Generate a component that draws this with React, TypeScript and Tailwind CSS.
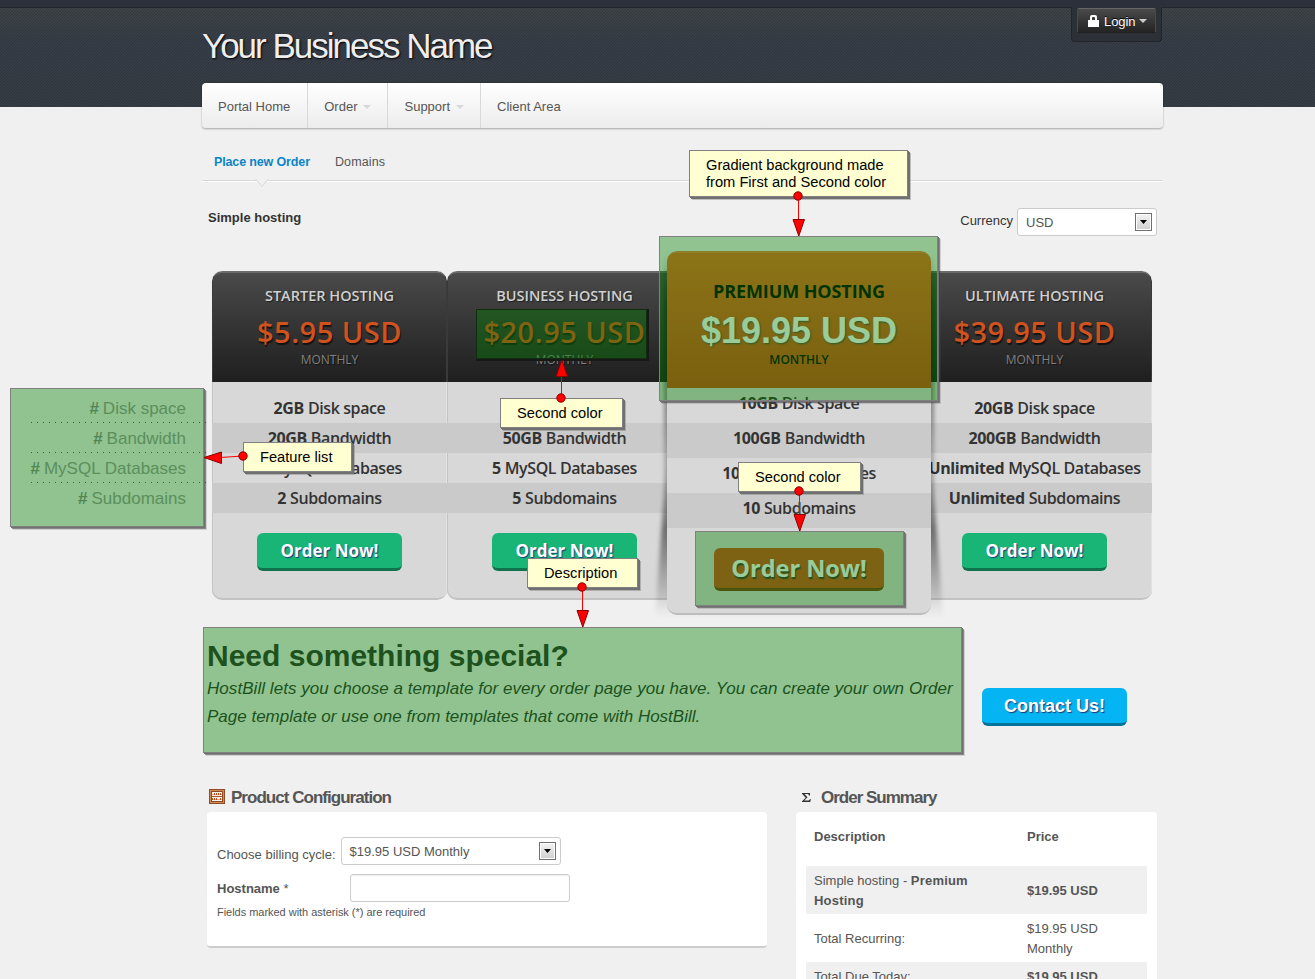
import React from "react";

type Feature = [string, string];

const plans: { name: string; price: string; features: Feature[]; featured?: boolean }[] = [
  { name: "STARTER HOSTING", price: "$5.95 USD", features: [["2GB", "Disk space"], ["20GB", "Bandwidth"], ["2", "MySQL Databases"], ["2", "Subdomains"]] },
  { name: "BUSINESS HOSTING", price: "$20.95 USD", features: [["20GB", "Disk space"], ["50GB", "Bandwidth"], ["5", "MySQL Databases"], ["5", "Subdomains"]] },
  { name: "PREMIUM HOSTING", price: "$19.95 USD", featured: true, features: [["10GB", "Disk space"], ["100GB", "Bandwidth"], ["10", "MySQL Databases"], ["10", "Subdomains"]] },
  { name: "ULTIMATE HOSTING", price: "$39.95 USD", features: [["20GB", "Disk space"], ["200GB", "Bandwidth"], ["Unlimited", "MySQL Databases"], ["Unlimited", "Subdomains"]] },
];

function Caret({ className }: { className: string }) {
  return (
    <svg width="8" height="4" viewBox="0 0 8 4" className={className}>
      <path d="M0 0h8L4 4z" fill="currentColor" />
    </svg>
  );
}

function Select({ value, className }: { value: string; className: string }) {
  return (
    <div className={`flex h-7 items-center justify-between rounded-[3px] border border-[#ccc] bg-white pl-2 pr-1 text-[13px] text-[#555] ${className}`}>
      <span className="pt-0.5">{value}</span>
      <span className="flex h-[18px] w-[17px] items-center justify-center border border-[#707070] bg-linear-to-b from-[#f4f4f4] to-[#cfcfcf] shadow-[inset_0_0_0_1px_#fff]">
        <svg width="7" height="4" viewBox="0 0 7 4"><path d="M0 0h7L3.5 4z" fill="#000" /></svg>
      </span>
    </div>
  );
}

function NavItem({ label, caret, last }: { label: string; caret?: boolean; last?: boolean }) {
  return (
    <div className={`flex items-center px-4 pt-0.5 text-[13px] text-[#555] ${last ? "" : "border-r border-[#d9d9d9]"}`}>
      <span className={caret || last ? "" : "pr-px"}>{label}</span>
      {caret && <Caret className="ml-1.5 text-[#d8d8d8]" />}
    </div>
  );
}

function Plan({ plan }: { plan: (typeof plans)[number] }) {
  return (
    <div className="flex h-[329px] w-[235px] shrink-0 flex-col overflow-hidden rounded-[10px] border-b-2 border-[#c2c2c2] bg-[#d8d8d8] shadow-[inset_1px_0_0_#c4c4c4,inset_-1px_0_0_#e2e2e2]">
      <div className="flex h-[111px] shrink-0 flex-col items-center rounded-t-[10px] border border-t-2 border-b-0 border-x-[#3a3a3a] border-t-[#6a6a6a] bg-linear-to-b from-[#4a4a4a] to-[#1f1f1f] whitespace-nowrap">
        <div className="mt-3 text-[14.5px] leading-[22px] font-semibold text-[#d0d0d0] [text-shadow:1px_1px_1px_rgba(0,0,0,0.5)]">{plan.name}</div>
        <div className="mt-1.5 text-[29px] leading-[38px] font-semibold tracking-[0.5px] text-[#d0521f] [text-shadow:1px_2px_1px_rgba(0,0,0,0.6)]">{plan.price}</div>
        <div className="mt-px text-[12px] leading-4 text-[#808080] [text-shadow:1px_1px_1px_rgba(0,0,0,0.5)]">MONTHLY</div>
      </div>
      <div className="mt-[11px] text-[16px] leading-[30px] font-semibold tracking-[-0.4px] text-[#333]">
        {plan.features.map(([n, t], i) => (
          <div key={i} className={`flex justify-center gap-1 whitespace-nowrap ${i % 2 ? "bg-[#cacaca]" : ""}`}>
            <b className="font-bold">{n}</b><span>{t}</span>
          </div>
        ))}
      </div>
      <div className="mt-5 h-[38px] w-[145px] self-center rounded-md border-b-[3px] border-[#11734e] bg-[#19b576] text-center text-[17px] leading-[35px] font-bold text-white [text-shadow:1px_1px_1px_#1a3a7a]">Order Now!</div>
    </div>
  );
}

function PlanShadow() {
  return (
    <svg width="304" height="380" viewBox="0 0 304 380" className="absolute -left-5 top-0 -z-10">
      <defs>
        <filter id="soft"><feGaussianBlur stdDeviation="2.2" /></filter>
        <linearGradient id="fade" x1="0" x2="0" y1="0" y2="1">
          <stop offset="0" stopColor="#000" stopOpacity="0" />
          <stop offset=".5" stopColor="#000" stopOpacity=".5" />
          <stop offset=".75" stopColor="#000" stopOpacity=".25" />
          <stop offset="1" stopColor="#000" stopOpacity="0" />
        </linearGradient>
        <linearGradient id="edge" x1="0" x2="0" y1="0" y2="1">
          <stop offset="0" stopColor="#000" stopOpacity="0" />
          <stop offset=".2" stopColor="#000" stopOpacity=".5" />
          <stop offset=".6" stopColor="#000" stopOpacity=".35" />
          <stop offset="1" stopColor="#000" stopOpacity="0" />
        </linearGradient>
      </defs>
      <g filter="url(#soft)">
        <path d="M17 4H287V270H17z" fill="url(#edge)" />
        <path d="M21 190L8 366H296L283 190z" fill="url(#fade)" />
      </g>
    </svg>
  );
}

function FeaturedPlan({ plan }: { plan: (typeof plans)[number] }) {
  return (
    <div className="relative z-10 -mt-5 mr-[-14px] ml-[-15px] w-[264px] shrink-0">
      <PlanShadow />
      <div className="flex h-[364px] flex-col overflow-hidden rounded-[10px] border-b-2 border-[#bcbcbc] bg-[#d8d8d8]">
        <div className="flex h-[137px] shrink-0 flex-col items-center rounded-t-[10px] border-t-2 border-[#ed8049] bg-linear-to-b from-[#e96c28] to-[#cc4b1a] whitespace-nowrap">
          <div className="mt-6 text-[18px] leading-7 font-bold tracking-[-0.1px] text-black">{plan.name}</div>
          <div className="mt-1.5 font-['Liberation_Sans',sans-serif] text-[36px] leading-[40px] font-bold text-white [text-shadow:1px_1px_2px_#444]">{plan.price}</div>
          <div className="mt-px text-[12px] leading-4 font-semibold text-black">MONTHLY</div>
        </div>
        <div className="text-[16px] leading-[30px] font-semibold tracking-[-0.4px] text-[#333]">
          {plan.features.map(([n, t], i) => (
            <div key={i} className={`flex h-[35px] items-center justify-center gap-1 pb-[5px] whitespace-nowrap ${i % 2 ? "bg-[#cacaca]" : ""}`}>
              <b className="font-bold">{n}</b><span>{t}</span>
            </div>
          ))}
        </div>
        <div className="mt-5 h-[43px] w-[170px] self-center rounded-md border-b-[3px] border-[#7c3a16] bg-[#cf4f1e] text-center text-[23.5px] leading-[40px] font-bold text-white [text-shadow:1px_2px_1px_#333]">Order Now!</div>
      </div>
    </div>
  );
}

function Highlight({ className, onDark }: { className: string; onDark?: boolean }) {
  return (
    <div className={`absolute z-20 border bg-[rgba(0,128,0,0.4)] ${onDark ? "border-[#102d10] shadow-[1px_1px_0_1px_#181818]" : "border-[#808080] shadow-[1px_1px_0_#707070,2px_2px_0_rgba(60,60,60,0.5),3px_3px_0_rgba(80,80,80,0.2)]"} ${className}`} />
  );
}

function Callout({ className, children }: { className: string; children: React.ReactNode }) {
  return (
    <div className={`absolute z-30 border border-[#808080] bg-[#ffffd2] px-4 text-[14.67px] leading-[17px] whitespace-nowrap text-black shadow-[1px_1px_0_#707070,2px_2px_0_#707070,3px_3px_0_rgba(100,100,100,0.35)] ${className}`}>
      {children}
    </div>
  );
}

function Arrows() {
  return (
    <svg width="1315" height="979" viewBox="0 0 1315 979" className="pointer-events-none absolute inset-0 z-40">
      <g stroke="#f00" fill="none">
        <path d="M798.5 196V220M561.5 398V375M582.5 587V612M799.5 491V516M243 456L220 457.5" />
      </g>
      <g stroke="#8b0000" strokeWidth="1" fill="#f00">
        <path d="M793 219.5h11.5L798.8 236z" />
        <path d="M556 376.5h11.5L561.8 360z" />
        <path d="M577 610.5h11.5L582.8 627z" />
        <path d="M794 514.5h11.5L799.8 531z" />
        <path d="M221.500 452v11.500L204 457.500z" />
        <circle cx="798" cy="196" r="4.200" />
        <circle cx="561" cy="398" r="4.200" />
        <circle cx="582" cy="587" r="4.200" />
        <circle cx="799" cy="491" r="4.200" />
        <circle cx="243" cy="456" r="4.200" />
      </g>
    </svg>
  );
}

function HeaderTexture() {
  return (
    <svg width="1315" height="99" className="absolute left-0 top-2" shapeRendering="crispEdges">
      <pattern id="hatch" width="3" height="3" patternUnits="userSpaceOnUse">
        <path d="M0 2h1v1H0zM1 1h1v1H1zM2 0h1v1H2z" fill="#000" fillOpacity=".16" />
      </pattern>
      <rect width="1315" height="99" fill="url(#hatch)" />
    </svg>
  );
}

function AbacusIcon() {
  return (
    <svg width="16" height="16" viewBox="0 0 16 16" shapeRendering="crispEdges">
      <path d="M0 0h16v15H0z" fill="#8f4a26" />
      <path d="M1 1h14v13H1z" fill="#d08a55" />
      <path d="M2 2h12v11H2z" fill="#8f4a26" />
      <path d="M3 3h10v9H3z" fill="#f7f1ea" />
      <path d="M3 5h10v1H3zM3 10h10v1H3z" fill="#cfae96" />
      <path d="M5 4h1v2H5zM7 4h1v2H7zM9 4h1v2H9zM11 4h1v2h-1zM3 7h10v1H3zM3 9h1v2H3zM5 9h1v2H5zM7 9h1v2H7zM11 9h1v2h-1z" fill="#a85424" />
    </svg>
  );
}

export default function App() {
  return (
    <div className="relative h-[979px] w-[1315px] overflow-hidden bg-[#f0f0f0] font-['Liberation_Sans',Arial,sans-serif] text-[13px] text-[#555]">
      <header className="relative h-[107px] bg-[linear-gradient(#3f4547,#383e48_40%,#363d44)]">
        <HeaderTexture />
        <div className="h-2 border-b border-[#22262b] bg-[#2c303a]" />
        <div className="relative ml-[202px] flex w-[960px] items-start justify-between">
          <h1 className="mt-[17px] text-[35px] leading-[42px] tracking-[-2px] text-[#eee] [text-shadow:1px_1px_2px_#000]">Your Business Name</h1>
          <div className="-mt-px h-[35px] w-[91px] rounded-b border border-t-0 border-[#22262b] bg-[#2c3037] px-[5px] pt-px">
            <div className="flex h-[25px] w-[79px] items-center rounded-[2px] border border-x-[#4a4a4a] border-t-[#666] border-b-[#222] bg-linear-to-b from-[#4a4a4a] to-[#242424] pl-2.5 text-[13px] text-white">
              <svg width="11" height="12" viewBox="0 0 11 12"><path d="M0 5h2V2q0-2 2-2h3q2 0 2 2v3h2v7H0zM4 5h3V3q0-1-1-1H5Q4 2 4 3z" fill="#fff" /></svg>
              <span className="mt-0.5 ml-[5px] tracking-[-0.1px] [text-shadow:0_-1px_0_#000]">Login</span>
              <Caret className="ml-1 text-[#ccc]" />
            </div>
          </div>
        </div>
      </header>

      <main className="relative -mt-6 ml-[202px] w-[961px]">
        <nav className="flex h-[46px] w-[961px] rounded-[4px] border-b border-[#bbb] bg-linear-to-b from-white to-[#ececec] shadow-[0_0_2px_rgba(0,0,0,0.35)]">
          <NavItem label="Portal Home" />
          <NavItem label="Order" caret />
          <NavItem label="Support" caret />
          <NavItem label="Client Area" last />
        </nav>

        <div className="relative flex h-[52px] w-[960px] gap-[25px] border-b border-[#d8d8d8] pl-3 pt-[25px] text-[12.500px] leading-4 shadow-[0_1px_0_#fff]">
          <span className="font-bold tracking-[-0.14px] text-[#0a85c7]">Place new Order</span>
          <span className="tracking-[0.15px]">Domains</span>
          <svg width="14" height="9" viewBox="0 0 14 9" className="absolute left-[53px] top-[50px]">
            <path d="M.5 0L7 7.500L13.500 0" fill="#f0f0f0" stroke="#d8d8d8" />
          </svg>
        </div>

        <div className="flex h-[90px] items-start justify-between pl-1.5 pr-1.5 pt-[27px]">
          <h2 className="mt-0.5 text-[13px] leading-4 font-bold text-[#333]">Simple hosting</h2>
          <div className="flex gap-1 text-[#333]">
            <span className="mt-[3px] leading-5">Currency</span>
            <Select value="USD" className="w-[140px]" />
          </div>
        </div>

        <section className="ml-2.5 flex h-[356px] w-[940px] items-start font-['Open_Sans','Noto_Sans',sans-serif]">
          {plans.map((p) => (p.featured ? <FeaturedPlan key={p.name} plan={p} /> : <Plan key={p.name} plan={p} />))}
        </section>

        <section className="flex h-[159px] items-start pl-[5px] text-[#333]">
          <div className="w-[755px] pt-[9px]">
            <h2 className="text-[30px] leading-[40px] font-bold">Need something special?</h2>
            <p className="-mt-px text-[17px] leading-7 whitespace-nowrap italic">
              <span className="tracking-[0.053px]">HostBill lets you choose a template for every order page you have. You can create your own Order</span><br />
              Page template or use one from templates that come with HostBill.
            </p>
          </div>
          <div className="mt-[61px] ml-5 h-[38px] w-[145px] rounded-md border-b-[3px] border-[#04739c] bg-[#05b5f3] text-center text-[18px] leading-[36px] font-bold text-white [text-shadow:1px_1px_1px_#1a3a7a]">Contact Us!</div>
        </section>

        <section className="flex items-start gap-[29px] pl-[5px]">
          <div className="w-[560px]">
            <h3 className="flex h-[26px] items-start gap-1.5 pl-0.5">
              <span className="mt-[3px]"><AbacusIcon /></span>
              <span className="mt-px text-[17px] leading-[22px] font-bold tracking-[-0.97px]">Product Configuration</span>
            </h3>
            <div className="h-[136px] rounded-[4px] border-b-2 border-[#ccc] bg-white px-2.5 pt-[25px]">
              <div className="flex gap-[5px]">
                <span className="mt-2 leading-5">Choose billing cycle:</span>
                <Select value="$19.95 USD Monthly" className="w-[220px]" />
              </div>
              <div className="mt-[9px] flex items-center">
                <span className="w-[133px] pt-px"><b>Hostname</b> *</span>
                <input className="h-7 w-[220px] rounded-[3px] border border-[#ccc] bg-white shadow-[inset_0_1px_1px_rgba(0,0,0,0.075)]" />
              </div>
              <div className="mt-0.5 text-[11px] leading-4 tracking-[-0.03px]">Fields marked with asterisk (*) are required</div>
            </div>
          </div>

          <div className="w-[361px]">
            <h3 className="flex h-[26px] items-start pl-1.5">
              <svg width="9" height="9" viewBox="0 0 9 9" className="mt-[7px]"><path d="M0 0h8v2.500H7Q7 1 5.500 1H2.500L5.500 4.300L2.300 7.500H6Q7.500 7.500 8 6h.800L8.300 9H0V8.300L3.700 4.700L0 .800z" fill="#333" /></svg>
              <span className="mt-px ml-2.5 text-[17px] leading-[22px] font-bold tracking-[-1px]">Order Summary</span>
            </h3>
            <div className="h-[220px] rounded-[4px] bg-white px-2.5 pt-[14px] leading-5">
              <div className="grid h-10 grid-cols-[213px_1fr] pt-px pl-2 font-bold"><span>Description</span><span>Price</span></div>
              <div className="grid h-12 grid-cols-[213px_1fr] items-center bg-[#f0f0f0] pt-0.5 pl-2"><span className="w-[180px]">Simple hosting - <b className="tracking-[0.2px]">Premium Hosting</b></span><b>$19.95 USD</b></div>
              <div className="grid h-12 grid-cols-[213px_1fr] items-center pt-0.5 pl-2"><span>Total Recurring:</span><span className="w-20">$19.95 USD Monthly</span></div>
              <div className="grid h-12 grid-cols-[213px_1fr] bg-[#f0f0f0] pt-[5px] pl-2"><span>Total Due Today:</span><b>$19.95 USD</b></div>
            </div>
          </div>
        </section>
      </main>

      <div className="absolute left-[30px] top-[393px] z-10 w-[176px] text-right text-[17px] text-[#999]">
        {["Disk space", "Bandwidth", "MySQL Databases", "Subdomains"].map((f, i) => (
          <div key={f} className="h-[30px] pt-px">
            <div className="h-7 pr-5 leading-[29px] whitespace-nowrap"><b className="mr-1 text-[#8a8a8a]">#</b>{f}</div>
            {i < 3 && <svg width="176" height="1" className="block"><path d="M1 .5H176" stroke="#555" strokeDasharray="1 5" /></svg>}
          </div>
        ))}
      </div>

      <Highlight className="left-[10px] top-[388px] h-[139px] w-[194px]" />
      <Highlight onDark className="left-[476px] top-[309px] h-[50px] w-[171px]" />
      <Highlight className="left-[659px] top-[236px] h-[165px] w-[279px]" />
      <Highlight className="left-[695px] top-[531px] h-[75px] w-[209px]" />
      <Highlight className="left-[203px] top-[627px] h-[126px] w-[759px]" />

      <Callout className="left-[689px] top-[150px] h-[47px] w-[219px] pt-1.5">Gradient background made<br />from First and Second color</Callout>
      <Callout className="left-[500px] top-[398px] h-[30px] w-[123px] pt-1.5">Second color</Callout>
      <Callout className="left-[243px] top-[442px] h-[30px] w-[109px] pt-1.5">Feature list</Callout>
      <Callout className="left-[738px] top-[462px] h-[30px] w-[123px] pt-1.5">Second color</Callout>
      <Callout className="left-[527px] top-[558px] h-[30px] w-[111px] pt-1.5">Description</Callout>
      <Arrows />
    </div>
  );
}
